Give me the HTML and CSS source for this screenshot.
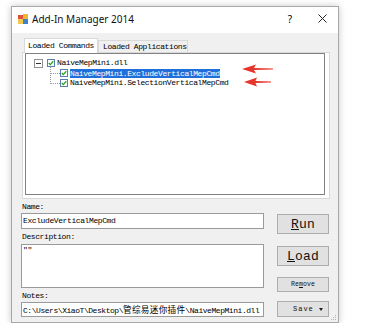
FILE: index.html
```html
<!DOCTYPE html>
<html lang="en">
<head>
    <meta charset="UTF-8">
    <title>Add-In Manager 2014</title>
    <link rel="stylesheet" href="styles.css">
</head>
<body>
    <div class="window">
        <div class="titlebar">
            <svg class="app-icon" width="10" height="10" viewBox="0 0 10 10">
                <rect x="0" y="1" width="5" height="4" fill="#e0503a"/>
                <rect x="5" y="0" width="5" height="5" fill="#f2b632"/>
                <rect x="0" y="5" width="5" height="5" fill="#f0c84a"/>
                <rect x="5" y="5" width="5" height="5" fill="#3d7fd1"/>
            </svg>
            <span class="title">Add-In Manager 2014</span>
            <span class="help">?</span>
            <svg class="close" width="9" height="9" viewBox="0 0 9 9">
                <path d="M0.5 0.5 L8.5 8.5 M8.5 0.5 L0.5 8.5" stroke="#222" stroke-width="1"/>
            </svg>
        </div>

        <div class="body">
            <div class="tabs">
                <div class="tab active">Loaded Commands</div>
                <div class="tab">Loaded Applications</div>
            </div>
            <div class="tab-panel">
                <div class="tree">
                    <div class="node">
                        <span class="expander"></span>
                        <svg class="check" width="8" height="8" viewBox="0 0 8 8">
                            <rect x="0.5" y="0.5" width="7" height="7" fill="#fff" stroke="#5a7fa8"/>
                            <path d="M1.8 4 L3.3 5.6 L6.3 2.2" fill="none" stroke="#27a327" stroke-width="1.3"/>
                        </svg>
                        <span class="label">NaiveMepMini.dll</span>
                    </div>
                    <div class="node child">
                        <svg class="check" width="8" height="8" viewBox="0 0 8 8">
                            <rect x="0.5" y="0.5" width="7" height="7" fill="#fff" stroke="#5a7fa8"/>
                            <path d="M1.8 4 L3.3 5.6 L6.3 2.2" fill="none" stroke="#27a327" stroke-width="1.3"/>
                        </svg>
                        <span class="label selected">NaiveMepMini.ExcludeVerticalMepCmd</span>
                    </div>
                    <div class="node child">
                        <svg class="check" width="8" height="8" viewBox="0 0 8 8">
                            <rect x="0.5" y="0.5" width="7" height="7" fill="#fff" stroke="#5a7fa8"/>
                            <path d="M1.8 4 L3.3 5.6 L6.3 2.2" fill="none" stroke="#27a327" stroke-width="1.3"/>
                        </svg>
                        <span class="label">NaiveMepMini.SelectionVerticalMepCmd</span>
                    </div>
                </div>
                <!-- red pointer arrows drawn over the tree -->
                <svg class="arrows" width="40" height="30" viewBox="0 0 40 30">
                    <path d="M4 7 L18 2.5 L16 6 L35 6.4 L35 7.6 L16 8 L18 11.5 Z" fill="#e8352b"/>
                    <path d="M6 20 L19 15.5 L17.5 19 L33 19.4 L33 20.6 L17.5 21 L19 24.5 Z" fill="#e8352b"/>
                </svg>
            </div>

            <div class="lower">
                <div class="fields">
                    <div class="field-label">Name:</div>
                    <div class="input name">ExcludeVerticalMepCmd</div>
                    <div class="field-label">Description:</div>
                    <div class="input desc">""</div>
                    <div class="field-label">Notes:</div>
                    <div class="input notes">C:\Users\XiaoT\Desktop\<span class="cjk">管综易迷你插件</span>\NaiveMepMini.dll</div>
                </div>
                <div class="actions">
                    <button class="btn big run"><u>R</u>un</button>
                    <button class="btn big load"><u>L</u>oad</button>
                    <button class="btn small remove">Re<u>m</u>ove</button>
                    <button class="btn small save">Save<span class="caret"></span></button>
                </div>
            </div>
        </div>

        <svg class="grip" width="5" height="5" viewBox="0 0 5 5">
            <rect x="4" y="0" width="1" height="1" fill="#b5b5b5"/>
            <rect x="2" y="2" width="1" height="1" fill="#b5b5b5"/>
            <rect x="4" y="2" width="1" height="1" fill="#b5b5b5"/>
            <rect x="0" y="4" width="1" height="1" fill="#b5b5b5"/>
            <rect x="2" y="4" width="1" height="1" fill="#b5b5b5"/>
            <rect x="4" y="4" width="1" height="1" fill="#b5b5b5"/>
        </svg>
    </div>
</body>
</html>
```

FILE: styles.css
```css
* {
    box-sizing: border-box;
}

body {
    margin: 0;
    background: #fff;
    font-family: "Liberation Mono", "Noto Sans CJK SC", monospace;
    font-size: 8px;
    letter-spacing: -0.4px;
    color: #000;
}

.window {
    position: relative;
    width: 328px;
    height: 317px;
    margin: 6px 0 0 11px;
    border: 1px solid #a8a8a8;
    background: #f0f0f0;
    box-shadow: 0 0 7px rgba(0, 0, 0, 0.22);
    display: flex;
    flex-direction: column;
}

.titlebar {
    height: 26px;
    background: #fff;
    display: flex;
    align-items: center;
    padding: 0 0 3px 6px;
}

.title {
    margin-left: 4px;
    font-family: "Noto Sans", "Liberation Sans", sans-serif;
    font-size: 10px;
    letter-spacing: 0;
    color: #111;
}

.help {
    margin-left: auto;
    width: 10px;
    text-align: center;
    font-family: "Noto Sans", "Liberation Sans", sans-serif;
    font-size: 10px;
    letter-spacing: 0;
    margin-right: 23px;
}

.close {
    margin-right: 11px;
}

.body {
    flex: 1;
    padding-top: 5px;
}

.tabs {
    display: flex;
    align-items: flex-end;
    height: 14px;
    margin-left: 12px;
    position: relative;
    z-index: 1;
}

.tab {
    height: 12px;
    width: 90px;
    padding-left: 4px;
    line-height: 11px;
    border: 1px solid #d9d9d9;
    border-bottom: none;
    background: #f0f0f0;
    white-space: nowrap;
}

.tab.active {
    height: 15px;
    width: 74px;
    padding-left: 3px;
    line-height: 13px;
    margin-bottom: -1px;
    background: #fff;
}

.tab-panel {
    position: relative;
    margin-left: 10px;
    width: 308px;
    height: 147px;
    border: 1px solid #d9d9d9;
    background: #fff;
    padding: 0 0 0 2px;
}

.tree {
    width: 300px;
    height: 142px;
    border: 1px solid #828282;
    background: #fff;
    padding: 4px 0 0 8px;
}

.node {
    position: relative;
    display: flex;
    align-items: center;
    height: 10px;
}

.child {
    padding-left: 26px;
}

.child::before {
    content: "";
    position: absolute;
    left: 16px;
    top: -5px;
    width: 9px;
    height: 10px;
    border-left: 1px dotted #9a9a9a;
    border-bottom: 1px dotted #9a9a9a;
}

.expander {
    position: relative;
    width: 9px;
    height: 9px;
    border: 1px solid #919191;
    background: #fff;
    margin-right: 4px;
}

.expander::after {
    content: "";
    position: absolute;
    left: 1px;
    top: 3px;
    width: 5px;
    height: 1px;
    background: #333;
}

.check {
    position: relative;
    z-index: 1;
    flex: none;
    margin-right: 2px;
}

.label {
    line-height: 10px;
    white-space: nowrap;
}

.label.selected {
    background: #1e6fd9;
    color: #fff;
    height: 9px;
    line-height: 9px;
}

.arrows {
    position: absolute;
    left: 215px;
    top: 9px;
}

.lower {
    display: grid;
    grid-template-columns: 243px 52px;
    column-gap: 13px;
    margin-left: 9px;
}

.fields {
    display: flex;
    flex-direction: column;
}

.field-label {
    height: 10px;
    line-height: 10px;
    margin-top: 3px;
    padding-left: 1px;
}

.input {
    border: 1px solid #9a9a9a;
    background: #fff;
    padding-left: 1px;
    white-space: nowrap;
    overflow: hidden;
}

.name {
    margin-top: 1px;
    height: 16px;
    line-height: 14px;
}

.desc {
    margin-top: 2px;
    height: 44px;
    line-height: 9px;
}

.notes {
    margin-top: 1px;
    height: 15px;
    line-height: 13px;
    font-size: 8px;
    letter-spacing: -0.45px;
}

.cjk {
    font-family: "Noto Sans CJK SC", sans-serif;
    font-size: 8.6px;
    letter-spacing: 0.3px;
}

.actions {
    display: flex;
    flex-direction: column;
    padding-top: 15px;
}

.btn {
    width: 52px;
    margin: 0;
    padding: 0;
    border: 1px solid #adadad;
    background: #e1e1e1;
    color: #111;
    font-family: "Liberation Mono", monospace;
}

.btn.big {
    height: 20px;
    font-size: 13px;
    letter-spacing: 0.2px;
}

.btn.load {
    margin-top: 12px;
}

.btn.small {
    font-size: 6.6px;
    letter-spacing: 0;
}

.btn.remove {
    margin-top: 11px;
    height: 15px;
}

.btn.save {
    margin-top: 9px;
    height: 16px;
    display: flex;
    align-items: center;
    padding-left: 15px;
    font-size: 7px;
    letter-spacing: 1px;
}

.caret {
    margin-left: auto;
    margin-right: 5px;
    width: 0;
    height: 0;
    border-left: 2.5px solid transparent;
    border-right: 2.5px solid transparent;
    border-top: 3px solid #222;
}

.grip {
    position: absolute;
    right: 2px;
    bottom: 2px;
}
```
